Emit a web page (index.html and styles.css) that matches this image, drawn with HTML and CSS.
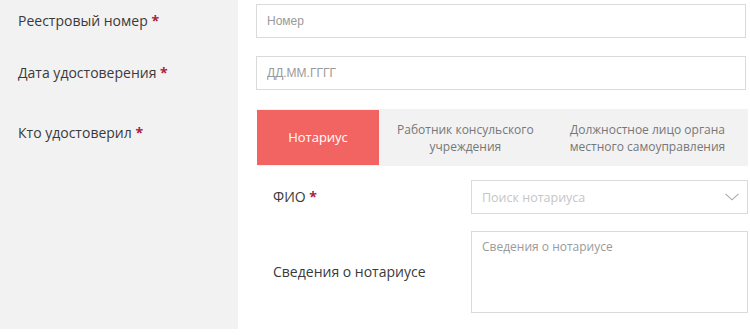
FILE: index.html
```html
<!DOCTYPE html>
<html lang="ru">
<head>
    <meta charset="UTF-8">
    <meta name="viewport" content="width=device-width, initial-scale=1.0">
    <title>Сведения об удостоверении</title>
    <link rel="stylesheet" href="styles.css">
</head>
<body>
    <div class="form">
        <!-- Реестровый номер -->
        <div class="form-row row-first">
            <div class="label-cell">Реестровый номер <span class="req">*</span></div>
            <div class="field-cell">
                <input class="text-input ph-arial" type="text" placeholder="Номер">
            </div>
        </div>

        <!-- Дата -->
        <div class="form-row row-date">
            <div class="label-cell">Дата удостоверения <span class="req">*</span></div>
            <div class="field-cell">
                <input class="text-input ph-arial" type="text" placeholder="ДД.ММ.ГГГГ">
            </div>
        </div>

        <!-- Кто удостоверил -->
        <div class="form-row row-who">
            <div class="label-cell">Кто удостоверил <span class="req">*</span></div>
            <div class="field-cell">
                <div class="tabs">
                    <div class="tab active">Нотариус</div>
                    <div class="tab">Работник консульского<br>учреждения</div>
                    <div class="tab">Должностное лицо органа<br>местного самоуправления</div>
                </div>

                <div class="sub-form">
                    <div class="sub-row">
                        <div class="sub-label">ФИО <span class="req">*</span></div>
                        <div class="select-box">
                            <input class="text-input ph-light" type="text" placeholder="Поиск нотариуса">
                            <svg class="chevron" width="14" height="8" viewBox="0 0 14 8">
                                <polyline points="0.5,0.8 7,6.8 13.5,0.8" fill="none" stroke="#a8a8a8" stroke-width="1.1"/>
                            </svg>
                        </div>
                    </div>
                    <div class="sub-row">
                        <div class="sub-label">Сведения о нотариусе</div>
                        <textarea class="text-area" placeholder="Сведения о нотариусе"></textarea>
                    </div>
                </div>
            </div>
        </div>
    </div>
</body>
</html>
```

FILE: styles.css
```css
/* базовые стили */
body {
    margin: 0;
    padding: 0;
    background: #fff;
    font-family: 'Open Sans', 'Liberation Sans', sans-serif;
    color: #3a3a3a;
}

.form {
    width: 750px;
}

/* строка формы: серая колонка подписи + поле */
.form-row {
    display: grid;
    grid-template-columns: 238px 1fr;
}

.label-cell {
    background: #f2f2f2;
    font-size: 14px;
    line-height: 20px;
    padding: 11px 0 0 18px;
}

.req {
    color: #a8233f;
    font-weight: bold;
}

.field-cell {
    padding: 4px 4px 14px 18px;
}

.row-date .field-cell {
    padding-bottom: 15px;
}

.row-who .label-cell {
    padding-top: 18px;
}

.row-who .field-cell {
    padding: 4px 2px 16px 19px;
}

/* поля ввода */
.text-input {
    box-sizing: border-box;
    display: block;
    width: 100%;
    height: 34px;
    margin: 0;
    border: 1px solid #dadada;
    background: #fff;
    padding: 0 10px;
    outline: none;
}

.ph-arial {
    font-family: 'Liberation Sans', Arial, sans-serif;
    font-size: 12px;
}
.ph-arial::placeholder {
    color: #9a9a9a;
}

.ph-light {
    font-family: 'Open Sans', sans-serif;
    font-size: 12.5px;
}
.ph-light::placeholder {
    color: #c6c6c6;
}

/* вкладки */
.tabs {
    display: flex;
    height: 57px;
    background: #f2f2f2;
}

.tab {
    display: flex;
    align-items: center;
    justify-content: center;
    flex-shrink: 0;
    white-space: nowrap;
    text-align: center;
    padding: 0 18px;
    font-size: 12px;
    line-height: 17px;
    color: #777;
}

.tab.active {
    min-width: 122px;
    box-sizing: border-box;
    background: #f26461;
    color: #fff;
    font-size: 13px;
    margin: 1px 0;
}

/* вложенная форма */
.sub-form {
    display: flex;
    flex-direction: column;
    gap: 17px;
    padding: 14px 0 0 16px;
}

.sub-row {
    display: grid;
    grid-template-columns: 198px 1fr;
    align-items: center;
}

.sub-label {
    font-size: 14px;
    line-height: 20px;
}

.select-box {
    position: relative;
}

.chevron {
    position: absolute;
    right: 9px;
    top: 13px;
}

.text-area {
    box-sizing: border-box;
    display: block;
    width: 100%;
    height: 82px;
    margin: 0;
    border: 1px solid #dadada;
    padding: 6px 10px;
    resize: none;
    outline: none;
    font-family: 'Open Sans', sans-serif;
    font-size: 12px;
}
.text-area::placeholder {
    color: #9a9a9a;
}
```
